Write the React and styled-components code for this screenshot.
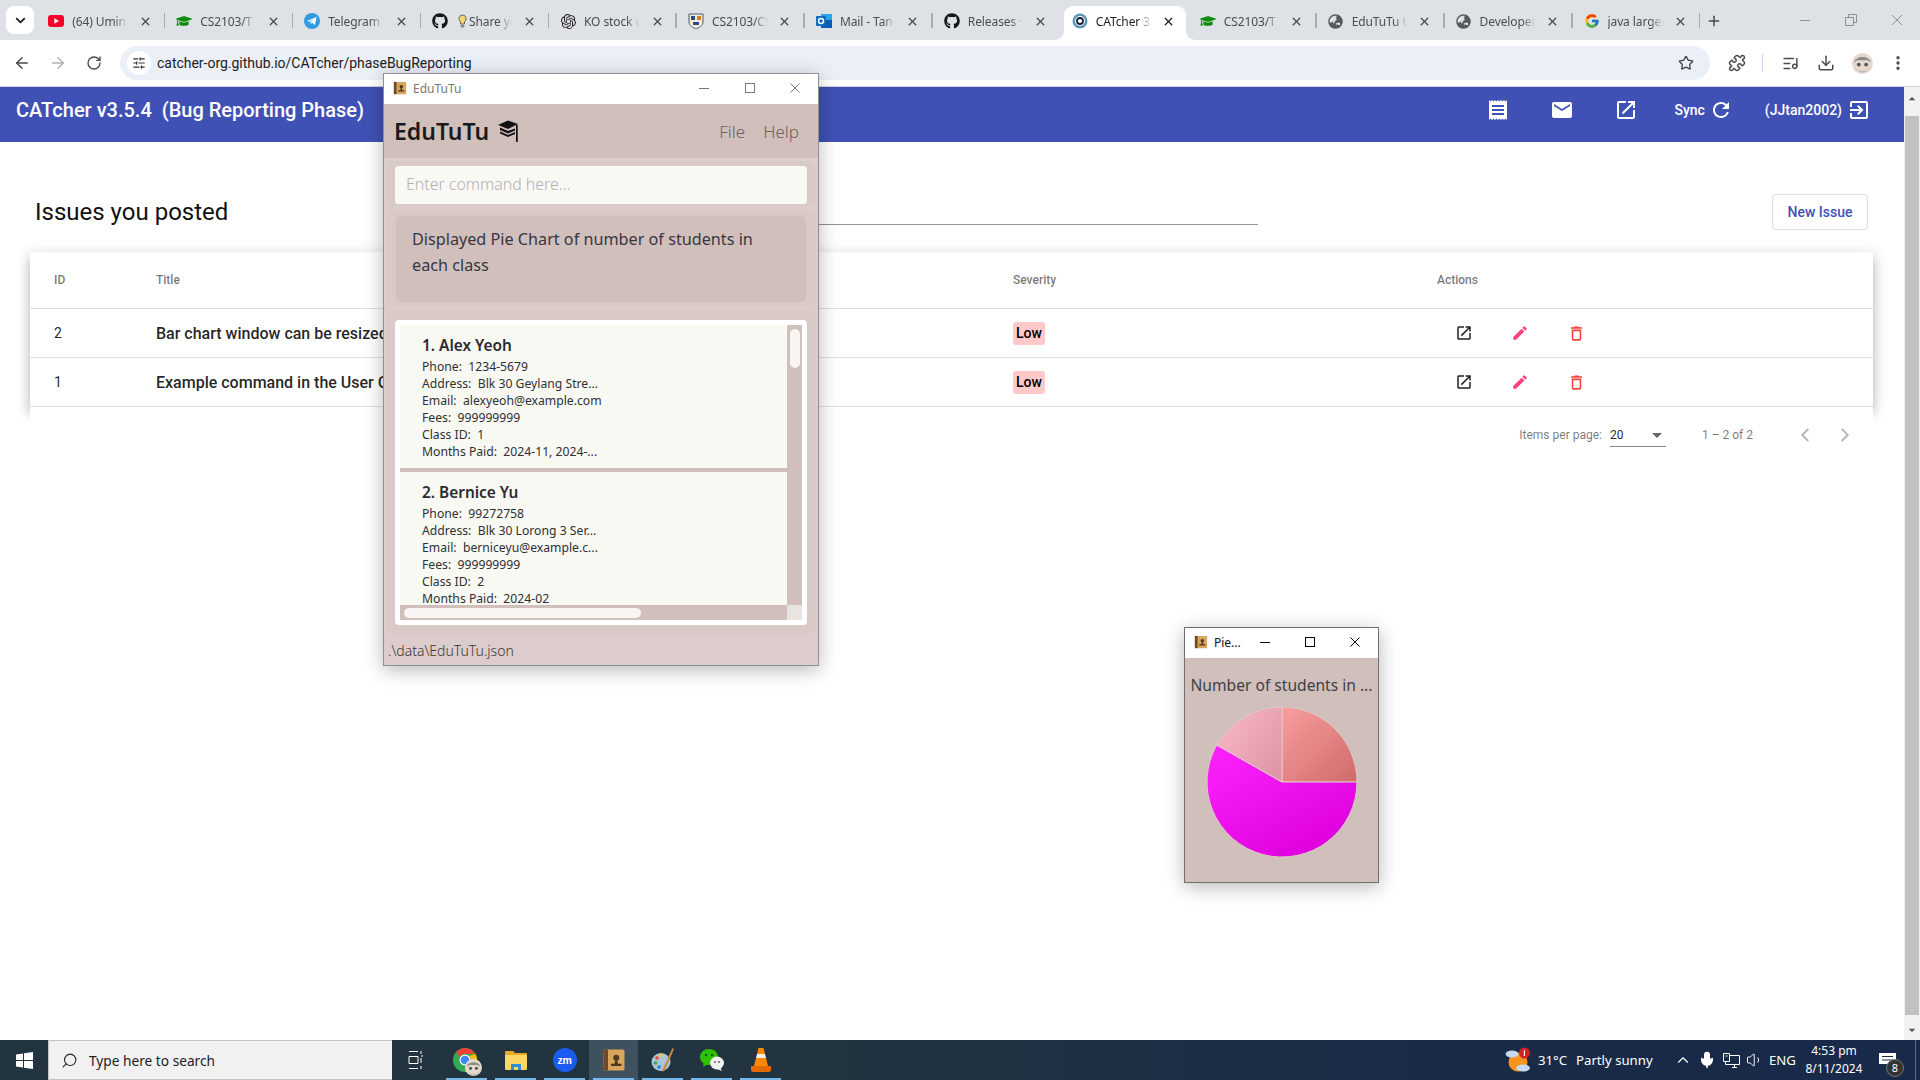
import React from "react";
import styled, { createGlobalStyle, css } from "styled-components";
import { ArrowLeft, ArrowRight, RotateCw, Star, Puzzle, ListMusic, Download, MoreVertical, ChevronDown, ChevronUp, ChevronLeft, ChevronRight, X, Plus, Search, SlidersHorizontal, Mic, Volume1 } from "lucide-react";
import { FaGithub, FaGraduationCap, FaGlobeAsia } from "react-icons/fa";
import { SiOpenai } from "react-icons/si";
import { FcGoogle } from "react-icons/fc";
import { MdReceipt, MdEmail, MdOpenInNew, MdRefresh, MdExitToApp, MdEdit, MdDeleteOutline, MdArrowDropDown, MdArrowDropUp } from "react-icons/md";

const SEGOE = `"Noto Sans", "Open Sans", sans-serif`;

const Global = createGlobalStyle`
  html, body { margin: 0; padding: 0; width: 1920px; height: 1080px; overflow: hidden; background: #fff; }
  body { font-family: Roboto, sans-serif; }
  * { box-sizing: border-box; }
`;

const Screen = styled.div`
  position: relative; width: 1920px; height: 1080px; display: flex; flex-direction: column; overflow: hidden;
`;

/* ---------- tab strip ---------- */
const TabStrip = styled.div`
  height: 40px; flex: none; background: #dee1e6; display: flex; align-items: flex-end; padding-left: 6px; position: relative;
`;
const TabSearch = styled.div`
  width: 28px; height: 28px; margin: 0 3.25px 6px 0; border-radius: 8px; background: #fff; display: flex; align-items: center; justify-content: center; color: #202124;
`;
const Tab = styled.div`
  position: relative; flex: none; width: 127.95px; height: 34px; display: flex; align-items: center; padding: 0 0 4px 11px; font-family: ${SEGOE}; font-size: 12px; letter-spacing: -0.1px;
  color: ${(p) => (p.$active ? "#1f1f1f" : "#4a4d52")};
  ${(p) => p.$sep && css`
    &::after { content: ""; position: absolute; right: 0; top: 7px; width: 1.5px; height: 15px; background: #a9acb1; }
  `}
`;
const TabShape = styled.div`
  position: absolute; left: 3px; right: 3px; top: 0; bottom: 0; background: #fff; border-radius: 9px 9px 0 0;
  &::before, &::after { content: ""; position: absolute; bottom: 0; width: 9px; height: 9px; }
  &::before { left: -9px; background: radial-gradient(circle at 0 0, transparent 8.5px, #fff 9px); }
  &::after { right: -9px; background: radial-gradient(circle at 100% 0, transparent 8.5px, #fff 9px); }
`;
const Fav = styled.span`
  position: relative; flex: none; width: 16px; height: 16px; display: flex; align-items: center; justify-content: center;
`;
const TabLabel = styled.span`
  position: relative; flex: none; width: 60px; margin-left: 8px; white-space: nowrap; overflow: hidden; display: flex; align-items: center;
  -webkit-mask-image: linear-gradient(90deg, #000 70%, transparent 93%); mask-image: linear-gradient(90deg, #000 70%, transparent 93%);
`;
const BulbMark = styled.svg`
  flex: none; margin: 0 2px 0 2px;
`;
const TabClose = styled.span`
  position: relative; flex: none; width: 16px; margin-left: 5px; display: flex; align-items: center; justify-content: center; color: ${(p) => (p.$active ? "#1f1f1f" : "#45484c")};
`;
const NewTab = styled.div`
  flex: none; width: 28px; height: 34px; padding-bottom: 4px; display: flex; align-items: center; justify-content: center; color: #45484c;
`;
const WinControls = styled.div`
  margin-left: auto; align-self: flex-start; height: 40px; display: flex;
`;
const WinSlot = styled.span`
  width: ${(p) => p.$w || 46}px; display: flex; align-items: center; justify-content: center; color: ${(p) => p.$c || "#8d9095"};
`;

/* ---------- toolbar ---------- */
const Toolbar = styled.div`
  height: 47px; flex: none; background: #fff; display: flex; align-items: flex-start; padding: 6px 0 0 4px; border-bottom: 1px solid #d0d2d5;
`;
const ToolSlot = styled.span`
  flex: none; width: 36px; height: 34px; display: flex; align-items: center; justify-content: center; color: ${(p) => p.$c || "#474a4e"};
`;
const AddressBar = styled.div`
  flex: none; margin-left: 8px; width: 1590px; height: 34px; border-radius: 17px; background: #ebeff7; display: flex; align-items: center; padding-left: 7px; color: #1f1f1f;
`;
const SiteButton = styled.span`
  width: 24px; height: 24px; border-radius: 50%; background: #fff; display: flex; align-items: center; justify-content: center; color: #333;
`;
const Url = styled.span`
  margin-left: 6px; font-family: Roboto, sans-serif; font-size: 14px; letter-spacing: -0.02px; color: #202124;
`;
const StarSlot = styled.span`
  margin-left: auto; margin-right: 16px; display: flex; color: #444;
`;
const ToolSep = styled.span`
  flex: none; width: 1px; height: 18px; margin: 8px 9px 0 7px; background: #c8d8f0;
`;
const FirstSlot = styled(ToolSlot)`
  margin-left: 9px;
`;

/* ---------- page ---------- */
const PageRow = styled.div`
  flex: 1; min-height: 0; display: flex;
`;
const Page = styled.div`
  flex: 1; min-width: 0; display: flex; flex-direction: column; background: #fff;
`;
const AppBar = styled.header`
  height: 55px; flex: none; background: #3f51b5; color: #fff; display: flex; align-items: center; padding: 0 28px 9px 16px;
`;
const AppTitle = styled.div`
  font-size: 20px; font-weight: 500; white-space: pre;
`;
const BarIcons = styled.div`
  margin-left: auto; display: flex; align-items: center; font-size: 14px; font-weight: 500;
`;
const BarIcon = styled.span`
  flex: none; width: ${(p) => p.$w || 64}px; margin-left: ${(p) => p.$ml || 0}px; display: flex; justify-content: center;
`;
const BarText = styled.span`
  margin-left: ${(p) => p.$ml || 0}px; white-space: nowrap;
`;
const Content = styled.main`
  padding: 52px 31px 0 30px;
`;
const TitleRow = styled.div`
  height: 36px; display: flex; align-items: center; margin-bottom: 22px;
`;
const Heading = styled.h1`
  flex: 0 0 530px; margin: 0; padding-left: 5px; font-size: 24px; font-weight: 400; color: #111;
`;
const FilterLine = styled.div`
  flex: none; width: 698px; height: 1px; margin-top: 24px; background: #949494;
`;
const NewIssue = styled.button`
  margin: 0 5px 0 auto; width: 96px; height: 36px; background: #fff; border: 1px solid #dfdfdf; border-radius: 4px; color: #3f51b5; font: 500 14px Roboto, sans-serif; padding: 0;
`;
const Table = styled.div`
  background: #fff; box-shadow: 0 5px 5px -3px rgba(0,0,0,.2), 0 8px 10px 1px rgba(0,0,0,.14), 0 3px 14px 2px rgba(0,0,0,.12);
`;
const Row = styled.div`
  display: grid; grid-template-columns: 126px 857px 424px 1fr; align-items: center; height: ${(p) => (p.$head ? 57 : 49)}px; border-bottom: 1px solid #dfdfdf;
  font-size: 14px; color: rgba(0,0,0,.87);
`;
const HeadCell = styled.div`
  font-size: 12px; font-weight: 500; color: rgba(0,0,0,.54); padding-left: ${(p) => p.$pl || 0}px;
`;
const IdCell = styled.div`
  padding-left: 24px;
`;
const TitleCell = styled.div`
  font-size: 16px; font-weight: 500; white-space: nowrap; overflow: hidden;
`;
const Badge = styled.span`
  display: inline-flex; align-items: center; justify-content: center; width: 32px; height: 23px; border-radius: 3px; background: #ffc9c9; color: #000; font-weight: 500; font-size: 14px; vertical-align: middle;
`;
const SeverityCell = styled.div`
  display: flex; align-items: center;
`;
const Actions = styled.div`
  display: flex; padding-left: 18px;
`;
const ActionIcon = styled.span`
  flex: none; width: 56px; display: flex; color: ${(p) => p.$c};
`;
const Paginator = styled.div`
  position: relative; background: #fff; height: 56px; display: flex; align-items: center; justify-content: flex-end; padding-right: 8px; font-size: 12px; color: rgba(0,0,0,.54);
`;
const PageSelect = styled.div`
  position: relative; flex: none; width: 56px; height: 24px; margin-left: 8px; border-bottom: 1px solid #8a8a8a; color: rgba(0,0,0,.87); display: flex; align-items: center;
  & > svg { position: absolute; right: -3px; top: 0; color: #666; }
`;
const RangeLabel = styled.span`
  margin: 0 32px 0 36px;
`;
const PageBtn = styled.span`
  flex: none; width: 40px; display: flex; justify-content: center; color: #b5b5b5;
`;
const PageScrollbar = styled.div`
  flex: none; width: 16px; background: #f1f1f1; display: flex; flex-direction: column; align-items: center; color: #505050; padding: 4px 0 2px;
`;
const ThumbTrack = styled.div`
  flex: 1; width: 100%; padding: 9px 1px 7px; display: flex;
`;
const Thumb = styled.div`
  flex: 1; background: #c1c1c1;
`;

/* ---------- taskbar ---------- */
const Taskbar = styled.footer`
  height: 40px; flex: none; display: flex; align-items: center; background: linear-gradient(90deg, #21343f 0%, #21343f 42%, #1a2b47 75%, #18294a 100%); color: #fff; font-family: ${SEGOE};
`;
const StartBtn = styled.div`
  flex: none; width: 48px; height: 40px; display: flex; align-items: center; justify-content: center;
`;
const SearchBox = styled.div`
  flex: none; width: 344px; height: 40px; background: #f1f1f1; border: 1px solid #c4c4c4; border-width: 1px 0 1px 1px; display: flex; align-items: center; padding-left: 12px; color: #222; font-size: 13.7px;
  & > svg { transform: scaleX(-1); margin-right: 11px; }
`;
const TaskView = styled.div`
  flex: none; width: 48px; height: 40px; display: flex; align-items: center; justify-content: center; margin-right: 2px;
`;
const AppSlot = styled.div`
  position: relative; flex: none; width: 49px; height: 40px; display: flex; align-items: center; justify-content: center;
  ${(p) => p.$on && css`background: #3d525e;`}
  ${(p) => p.$run && css`
    &::after { content: ""; position: absolute; left: 4px; right: 4px; bottom: 0; height: 2px; background: #76b9ed; }
  `}
`;
const ZoomIcon = styled.span`
  width: 24px; height: 24px; border-radius: 50%; background: #1a5cf0; color: #fff; font: 700 10.5px/24px "Liberation Sans", sans-serif; text-align: center; letter-spacing: -.4px;
`;
const ChromeWrap = styled.span`
  position: relative; display: flex; margin-left: -3px;
`;
const ChromeBadge = styled.span`
  position: absolute; right: -5px; bottom: -4px; display: flex;
`;
const Tray = styled.div`
  margin-left: auto; height: 40px; display: flex; align-items: center; font-size: 13.2px; padding-right: 4px;
`;
const TrayText = styled.span`
  flex: none; width: ${(p) => p.$w}px; margin-left: ${(p) => p.$ml || 0}px; white-space: nowrap;
`;
const TraySlot = styled.span`
  flex: none; width: ${(p) => p.$w || 24}px; margin-left: ${(p) => p.$ml || 0}px; display: flex; justify-content: center; align-items: center; position: relative;
`;
const Clock = styled.div`
  flex: none; width: 64px; margin-left: 7px; text-align: center; font-size: 12px; line-height: 18px; white-space: nowrap;
`;
const NoteCount = styled.span`
  position: absolute; left: 20px; top: 6px; width: 18px; height: 18px; border-radius: 50%; background: #333; border: 1px solid #777; color: #fff; font-size: 11px; line-height: 16px; text-align: center;
`;
const DesktopEdge = styled.span`
  flex: none; width: 1px; height: 40px; background: #5f6f85; margin-left: 7px;
`;

/* ---------- desktop windows ---------- */
const FxWindow = styled.section`
  position: absolute; left: ${(p) => p.$x}px; top: ${(p) => p.$y}px; width: ${(p) => p.$w}px; height: ${(p) => p.$h}px; display: flex; flex-direction: column;
  border: 1px solid ${(p) => p.$border}; background: #dccccb; font-family: ${SEGOE};
  box-shadow: 0 4px 18px rgba(0,0,0,.28);
`;
const FxTitle = styled.div`
  flex: none; height: 30px; background: #fff; display: flex; align-items: center; padding: 0 ${(p) => p.$pr}px 2px 9px; font-size: 12px; color: ${(p) => p.$c};
`;
const FxName = styled.span`
  margin-left: 6px;
`;
const FxButtons = styled.div`
  margin-left: auto; display: flex; height: 100%;
`;
const MenuBar = styled.div`
  flex: none; height: 54px; background: #d1bfbc; display: flex; align-items: center; padding-left: 10px;
`;
const Logo = styled.div`
  font-size: 23px; font-weight: 600; color: #1a1a1a; display: flex; align-items: center;
  & > svg { margin-left: 8px; }
`;
const MenuItems = styled.div`
  margin-left: auto; margin-right: 19px; display: flex; gap: 18px; font-size: 17px; font-weight: 300; color: #6f5f5d;
`;
const Pane = styled.div`
  flex: ${(p) => (p.$grow ? "1 1 0" : "none")}; min-height: 0; height: ${(p) => (p.$h ? p.$h + "px" : "auto")}; margin: 2px 2px 0; border-radius: 8px; background: #d9c9c7; border: 1px solid #dccecc; display: flex; flex-direction: column; padding: ${(p) => p.$pad};
`;
const CommandBox = styled.div`
  height: 38px; flex: none; border-radius: 3px; background: #f9f9f4; padding: 0 0 2px 11px; display: flex; align-items: center; font-size: 15.9px; font-weight: 300; color: #b5adb6;
`;
const ResultBox = styled.div`
  height: 86px; flex: none; border-radius: 5px; background: #d1bfbc; padding: 10px 16px; font-size: 16.2px; line-height: 26px; color: #37373f;
`;
const ListFrame = styled.div`
  flex: 1; min-height: 0; background: #fff; border-radius: 4px; padding: 5px; display: grid; grid-template-columns: 1fr 15px; grid-template-rows: 1fr 15px;
`;
const ListView = styled.div`
  overflow: hidden; min-height: 0; background: #d1bfbc; display: flex; flex-direction: column; gap: 4px;
`;
const Card = styled.article`
  flex: none; height: 143px; background: #f9f9f4; padding: 11px 0 0 22px; color: #2f2f33;
`;
const CardName = styled.div`
  font-size: 15.4px; font-weight: 600; line-height: 20px; margin-bottom: 2px; white-space: pre; color: #2b2b2f;
`;
const CardLine = styled.div`
  font-size: 12.2px; line-height: 17px; white-space: pre;
`;
const VBar = styled.div`
  background: #d1bfbc; padding: 4px 2px 0 3px;
`;
const VThumb = styled.div`
  height: 39px; background: #f9f5f3; border-radius: 5px;
`;
const HBar = styled.div`
  background: #d1bfbc; padding: 3px 0 2px 4px;
`;
const HThumb = styled.div`
  width: 237px; height: 10px; background: #f9f5f3; border-radius: 5px;
`;
const Corner = styled.div`
  background: #e8e4e4;
`;
const StatusBar = styled.div`
  flex: none; height: 30px; display: flex; align-items: center; padding-left: 4px; font-size: 14px; font-weight: 300; color: #3c3538;
`;
const ChartBody = styled.div`
  flex: 1; background: #d1bfbc; display: flex; flex-direction: column; align-items: center;
`;
const ChartTitle = styled.div`
  margin-top: 14px; height: 26px; font-size: 15.6px; line-height: 26px; color: #3f3f46; white-space: nowrap;
`;
const PieSvg = styled.svg`
  margin-top: 7px;
`;

/* ---------- drawn icons ---------- */
const BookIcon = ({ s = 14 }) => (
  <svg width={s} height={s} viewBox="0 0 16 16">
    <rect x="1" y="1" width="14" height="14" rx="1" fill="#d9a55b" />
    <rect x="1" y="1" width="3" height="14" fill="#6d4a2a" />
    <circle cx="9.5" cy="6.5" r="2" fill="#4d3a22" />
    <path d="M9 8h1l.7 2.500H13v1.500H6v-1.500h2.300z" fill="#4d3a22" />
  </svg>
);
const CapLogo = () => (
  <svg width="22" height="24" viewBox="0 0 22 24">
    <path d="M1 6 L11 1.500 L21 5 L11 10z" fill="#111" />
    <path d="M3 8.500 L11 12 L18 9.500 V11.500 L11 14.500 L3 11z" fill="#111" />
    <path d="M3 12.500 L11 16 L18 13 V15 L11 18 L3 14.500z" fill="#111" />
    <rect x="19" y="6" width="1.700" height="17" fill="#111" />
  </svg>
);
const MinMaxClose = ({ c, slots, sw = 1 }) => (
  <FxButtons>
    <WinSlot $w={slots} $c={c}><svg width="12" height="12"><path d="M1 6.500h10" stroke="currentColor" strokeWidth={sw} /></svg></WinSlot>
    <WinSlot $w={slots} $c={c}><svg width="12" height="12"><rect x="1.500" y="1.500" width="9" height="9" fill="none" stroke="currentColor" strokeWidth={sw} /></svg></WinSlot>
    <WinSlot $w={slots} $c={c}><svg width="12" height="12"><path d="M1.500 1.500l9 9M10.500 1.500l-9 9" stroke="currentColor" strokeWidth={sw} /></svg></WinSlot>
  </FxButtons>
);
const Avatar = ({ s = 20 }) => (
  <svg width={s} height={s} viewBox="0 0 20 20">
    <circle cx="10" cy="10" r="10" fill="#e8d9cf" />
    <path d="M2 9 C3 2 17 2 18 9 L15 7 H5z" fill="#8a8a8a" />
    <circle cx="6.500" cy="11" r="1.800" fill="#555" /><circle cx="13.500" cy="11" r="1.800" fill="#555" />
    <path d="M3 14 C5 20 15 20 17 14 L14 17 H6z" fill="#bbb" />
  </svg>
);
const UtubeFav = () => (
  <svg width="16" height="16" viewBox="0 0 16 16"><rect x="0" y="2" width="16" height="12" rx="3" fill="#f4002b" /><path d="M6.300 5.200 L11 8 L6.300 10.800z" fill="#fff" /></svg>
);
const TgFav = () => (
  <svg width="16" height="16" viewBox="0 0 16 16"><circle cx="8" cy="8" r="8" fill="#2f9ae0" /><path d="M3 8 L12.500 4 L11 12 L8 9.800 L6.800 11 L6.400 8.900 L10.500 5.800 L5.400 8.800z" fill="#fff" /></svg>
);
const NusFav = () => (
  <svg width="16" height="16" viewBox="0 0 16 16"><path d="M1 1h14v8c0 4-4 5.500-7 7-3-1.500-7-3-7-7z" fill="#f5ead2" stroke="#4a5a80" /><rect x="3" y="3" width="4" height="4" fill="#2c4a8a" /><rect x="9" y="3" width="4" height="4" fill="#d97a2a" /><rect x="5" y="9" width="6" height="3" fill="#2c4a8a" /></svg>
);
const OutlookFav = () => (
  <svg width="16" height="16" viewBox="0 0 16 16"><rect x="5" y="1" width="11" height="12" fill="#28a8ea" /><rect x="5" y="7" width="11" height="8" fill="#0a5fb4" /><rect x="0" y="3" width="10" height="10" rx="1" fill="#0f6cbd" /><circle cx="5" cy="8" r="2.500" fill="none" stroke="#fff" strokeWidth="1.500" /></svg>
);
const CatcherFav = () => (
  <svg width="16" height="16" viewBox="0 0 16 16"><circle cx="8" cy="8" r="7.500" fill="#5b93bd" /><circle cx="8" cy="8" r="5" fill="#fff" /><circle cx="8" cy="8" r="3" fill="none" stroke="#123" strokeWidth="1.800" /></svg>
);
const Bulb = () => (
  <BulbMark width="9" height="15" viewBox="0 0 9 15"><path d="M4.500 1a3.600 3.600 0 0 0-2 6.600V10h4V7.600A3.600 3.600 0 0 0 4.500 1z" fill="#f9d56e" stroke="#333" strokeWidth=".7" /><rect x="2.700" y="11" width="3.600" height="2.400" fill="#888" /></BulbMark>
);
const WindowsLogo = () => (
  <svg width="17" height="17" viewBox="0 0 17 17"><path d="M0 2.400l7-1v6.600H0zM8 1.300l9-1.300V8H8zM0 9h7v6.600l-7-1zM8 9h9v8l-9-1.300z" fill="#fff" /></svg>
);
const TaskViewIcon = () => (
  <svg width="16" height="24" viewBox="0 0 16 24" fill="none" stroke="#fff"><path d="M1 3.500h9M1 20.500h9M1 8.500h9v7H1zM13 3v3M13 8h2M13 10v5M13 18v3" /></svg>
);
const ChromeIcon = () => (
  <ChromeWrap>
    <svg width="24" height="24" viewBox="0 0 24 24">
      <circle cx="12" cy="12" r="12" fill="#34a853" />
      <path d="M12 0a12 12 0 0 1 10.400 6H12a6 6 0 0 0-5.200 3L3.200 3.800A12 12 0 0 1 12 0z" fill="#ea4335" />
      <path d="M22.400 6A12 12 0 0 1 12 24l5.200-9A6 6 0 0 0 16 8z" fill="#fbbc05" />
      <circle cx="12" cy="12" r="5.500" fill="#fff" /><circle cx="12" cy="12" r="4.300" fill="#4285f4" />
    </svg>
    <ChromeBadge><Avatar s={17} /></ChromeBadge>
  </ChromeWrap>
);
const FolderIcon = () => (
  <svg width="22" height="20" viewBox="0 0 22 20"><path d="M0 2a1 1 0 0 1 1-1h7l2 2h11a1 1 0 0 1 1 1v3H0z" fill="#e8ab2e" /><rect y="5" width="22" height="15" rx="1" fill="#fcd664" /><path d="M6 20v-6h10v6h-3v-3H9v3z" fill="#2a8fd6" /></svg>
);
const PaletteIcon = () => (
  <svg width="24" height="26" viewBox="0 0 24 26"><ellipse cx="10" cy="15" rx="9.500" ry="9" fill="#a9c6dc" /><circle cx="6" cy="11" r="1.800" fill="#e94b3c" /><circle cx="10" cy="8.500" r="1.800" fill="#f7c331" /><circle cx="4.500" cy="16" r="1.800" fill="#3aa655" /><circle cx="8" cy="20" r="1.800" fill="#2d7fd3" /><path d="M21.500 1 L23 2 L14 23 L11.500 25 L12 21.500z" fill="#c98a3e" /></svg>
);
const WeChatIcon = () => (
  <svg width="26" height="26" viewBox="0 0 26 26"><ellipse cx="10" cy="10" rx="9" ry="8" fill="#2dc100" /><path d="M5 15l-1 5 5-3z" fill="#2dc100" /><circle cx="7" cy="8" r="1.200" fill="#0a5a00" /><circle cx="13" cy="8" r="1.200" fill="#0a5a00" /><ellipse cx="18" cy="16" rx="7" ry="6.500" fill="#f1f1f1" /><path d="M21 20l2 4-5-2z" fill="#f1f1f1" /><circle cx="16" cy="15" r="1" fill="#666" /><circle cx="20" cy="15" r="1" fill="#666" /></svg>
);
const VlcIcon = () => (
  <svg width="22" height="26" viewBox="0 0 22 26"><path d="M8.500 1h5l1.500 6H7z" fill="#ff8800" /><path d="M7 7h8l1 4H6z" fill="#eee" /><path d="M6 11h10l2 8H4z" fill="#ff8800" /><path d="M1 19h20v4a2 2 0 0 1-2 2H3a2 2 0 0 1-2-2z" fill="#e36a00" /></svg>
);
const WeatherIcon = () => (
  <svg width="26" height="26" viewBox="0 0 26 26">
    <circle cx="13" cy="15" r="9.500" fill="#f7941d" />
    <ellipse cx="7" cy="7" rx="6.500" ry="3.500" fill="#c6d9f0" />
    <ellipse cx="18" cy="21" rx="7" ry="3.500" fill="#c6d9f0" />
    <circle cx="19.500" cy="6" r="5.500" fill="#d32020" />
    <path d="M19 3.500l1-.7v6.200h-1.200V4.500z" fill="#fff" />
  </svg>
);
const NetIcon = () => (
  <svg width="17" height="15" viewBox="0 0 17 15" fill="none" stroke="#fff"><path d="M.5.500h6v8h-6zM2.500 3h2M6.500 2.500h10v9h-14V8.500M9 14.500h5M11.500 11.500v3" /></svg>
);
const NoteIcon = () => (
  <svg width="17" height="15" viewBox="0 0 17 15"><path d="M0 0h17v11h-5l-3 3.500V11H0z" fill="#fff" /><path d="M3 3.500h11M3 7h11" stroke="#1a2b47" /></svg>
);
const Pie = () => {
  const c = 77, r = 75;
  return (
    <PieSvg width="154" height="154" viewBox="0 0 154 154">
      <defs>
        <linearGradient id="a" x1="0" y1="0" x2="1" y2="1"><stop offset="0" stopColor="#f99e9e" /><stop offset="1" stopColor="#cf6a6a" /></linearGradient>
        <linearGradient id="b" x1="0" y1="0" x2="0.700" y2="1"><stop offset="0" stopColor="#ff24ff" /><stop offset="1" stopColor="#dd00dd" /></linearGradient>
        <linearGradient id="d" x1="0" y1="0" x2="1" y2="0.800"><stop offset="0" stopColor="#fbb9c8" /><stop offset="1" stopColor="#dd97a6" /></linearGradient>
      </defs>
      <path d={`M${c} ${c}L${c} ${c - r}A${r} ${r} 0 0 1 ${c + r} ${c}Z`} fill="url(#a)" stroke="#dfc9c6" />
      <path d={`M${c} ${c}L${c + r} ${c}A${r} ${r} 0 1 1 ${c - r * 0.87} ${c - r * 0.493}Z`} fill="url(#b)" stroke="#dfc9c6" />
      <path d={`M${c} ${c}L${c - r * 0.87} ${c - r * 0.493}A${r} ${r} 0 0 1 ${c} ${c - r}Z`} fill="url(#d)" stroke="#dfc9c6" />
    </PieSvg>
  );
};

/* ---------- data ---------- */
const tabs = [
  { f: <UtubeFav />, t: "(64) Umine", sep: 1 },
  { f: <FaGraduationCap size={16} color="#0e8a0e" />, t: "CS2103/T -", sep: 1 },
  { f: <TgFav />, t: "Telegram W", sep: 1 },
  { f: <FaGithub size={16} color="#161616" />, t: "Share yo", bulb: 1, sep: 1 },
  { f: <SiOpenai size={15} color="#222" />, t: "KO stock d", sep: 1 },
  { f: <NusFav />, t: "CS2103/CS", sep: 1 },
  { f: <OutlookFav />, t: "Mail - Tan J", sep: 1 },
  { f: <FaGithub size={16} color="#161616" />, t: "Releases · A" },
  { f: <CatcherFav />, t: "CATcher 3.5", active: 1 },
  { f: <FaGraduationCap size={16} color="#0e8a0e" />, t: "CS2103/T -", sep: 1 },
  { f: <FaGlobeAsia size={15} color="#55585c" />, t: "EduTuTu U", sep: 1 },
  { f: <FaGlobeAsia size={15} color="#55585c" />, t: "Developer", sep: 1 },
  { f: <FcGoogle size={16} />, t: "java largex", sep: 1 },
];

const issues = [
  { id: 2, title: "Bar chart window can be resized" },
  { id: 1, title: "Example command in the User Guide" },
];

const people = [
  { name: "1. Alex Yeoh", lines: ["Phone:  1234-5679", "Address:  Blk 30 Geylang Stre...", "Email:  alexyeoh@example.com", "Fees:  999999999", "Class ID:  1", "Months Paid:  2024-11, 2024-..."] },
  { name: "2. Bernice Yu", lines: ["Phone:  99272758", "Address:  Blk 30 Lorong 3 Ser...", "Email:  berniceyu@example.c...", "Fees:  999999999", "Class ID:  2", "Months Paid:  2024-02"] },
];

export default function App() {
  return (
    <Screen>
      <Global />
      <TabStrip>
        <TabSearch><ChevronDown size={15} strokeWidth={3} /></TabSearch>
        {tabs.map((t, i) => (
          <Tab key={i} $active={t.active} $sep={t.sep}>
            {t.active && <TabShape />}
            <Fav>{t.f}</Fav>
            <TabLabel>{t.bulb && <Bulb />}{t.t}</TabLabel>
            <TabClose $active={t.active}><X size={13} strokeWidth={2.4} /></TabClose>
          </Tab>
        ))}
        <NewTab><Plus size={16} strokeWidth={2.2} /></NewTab>
        <WinControls>
          <WinSlot><svg width="12" height="12"><path d="M1 6.500h10" stroke="currentColor" /></svg></WinSlot>
          <WinSlot><svg width="12" height="12" fill="none" stroke="currentColor"><path d="M.500 3.500h8v8h-8zM3.500 3.500v-3h8v8h-3" /></svg></WinSlot>
          <WinSlot><svg width="12" height="12"><path d="M1 1l10 10M11 1L1 11" stroke="currentColor" /></svg></WinSlot>
        </WinControls>
      </TabStrip>

      <Toolbar>
        <ToolSlot><ArrowLeft size={18} strokeWidth={2} /></ToolSlot>
        <ToolSlot $c="#b0b2b5"><ArrowRight size={18} strokeWidth={2} /></ToolSlot>
        <ToolSlot><RotateCw size={16} strokeWidth={2} /></ToolSlot>
        <AddressBar>
          <SiteButton><SlidersHorizontal size={14} strokeWidth={2} /></SiteButton>
          <Url>catcher-org.github.io/CATcher/phaseBugReporting</Url>
          <StarSlot><Star size={16} strokeWidth={2} /></StarSlot>
        </AddressBar>
        <FirstSlot><Puzzle size={18} strokeWidth={2} /></FirstSlot>
        <ToolSep />
        <ToolSlot><ListMusic size={17} strokeWidth={2} /></ToolSlot>
        <ToolSlot><Download size={18} strokeWidth={2} /></ToolSlot>
        <ToolSlot><Avatar s={21} /></ToolSlot>
        <ToolSlot><MoreVertical size={18} strokeWidth={2.4} /></ToolSlot>
      </Toolbar>

      <PageRow>
        <Page>
          <AppBar>
            <AppTitle>CATcher v3.5.4  (Bug Reporting Phase)</AppTitle>
            <BarIcons>
              <BarIcon><MdReceipt size={24} /></BarIcon>
              <BarIcon><MdEmail size={24} /></BarIcon>
              <BarIcon><MdOpenInNew size={24} /></BarIcon>
              <BarText $ml={16}>Sync</BarText>
              <BarIcon $w={24} $ml={4}><MdRefresh size={24} /></BarIcon>
              <BarText $ml={32}>(JJtan2002)</BarText>
              <BarIcon $w={34}><MdExitToApp size={24} /></BarIcon>
            </BarIcons>
          </AppBar>
          <Content>
            <TitleRow>
              <Heading>Issues you posted</Heading>
              <FilterLine />
              <NewIssue>New Issue</NewIssue>
            </TitleRow>
            <Table>
              <Row $head>
                <HeadCell $pl={24}>ID</HeadCell>
                <HeadCell>Title</HeadCell>
                <HeadCell>Severity</HeadCell>
                <HeadCell>Actions</HeadCell>
              </Row>
              {issues.map((it) => (
                <Row key={it.id}>
                  <IdCell>{it.id}</IdCell>
                  <TitleCell>{it.title}</TitleCell>
                  <SeverityCell><Badge>Low</Badge></SeverityCell>
                  <Actions>
                    <ActionIcon $c="#222"><MdOpenInNew size={18} /></ActionIcon>
                    <ActionIcon $c="#ff4081"><MdEdit size={18} /></ActionIcon>
                    <ActionIcon $c="#f44336"><MdDeleteOutline size={19} /></ActionIcon>
                  </Actions>
                </Row>
              ))}
            </Table>
            <Paginator>
              <span>Items per page:</span>
              <PageSelect>20<MdArrowDropDown size={24} /></PageSelect>
              <RangeLabel>1 – 2 of 2</RangeLabel>
              <PageBtn><ChevronLeft size={22} strokeWidth={2} /></PageBtn>
              <PageBtn><ChevronRight size={22} strokeWidth={2} /></PageBtn>
            </Paginator>
          </Content>
        </Page>
        <PageScrollbar>
          <MdArrowDropUp size={16} />
          <ThumbTrack><Thumb /></ThumbTrack>
          <MdArrowDropDown size={16} />
        </PageScrollbar>
      </PageRow>

      <Taskbar>
        <StartBtn><WindowsLogo /></StartBtn>
        <SearchBox><Search size={17} strokeWidth={1.5} />Type here to search</SearchBox>
        <TaskView><TaskViewIcon /></TaskView>
        <AppSlot $run><ChromeIcon /></AppSlot>
        <AppSlot $run><FolderIcon /></AppSlot>
        <AppSlot $run><ZoomIcon>zm</ZoomIcon></AppSlot>
        <AppSlot $run $on><BookIcon s={24} /></AppSlot>
        <AppSlot $run><PaletteIcon /></AppSlot>
        <AppSlot $run><WeChatIcon /></AppSlot>
        <AppSlot $run><VlcIcon /></AppSlot>
        <Tray>
          <TraySlot $w={26}><WeatherIcon /></TraySlot>
          <TrayText $w={29} $ml={7}>31°C</TrayText>
          <TrayText $w={78} $ml={9}>Partly sunny</TrayText>
          <TraySlot $ml={17}><ChevronUp size={18} strokeWidth={1.5} /></TraySlot>
          <TraySlot><Mic size={18} strokeWidth={2} fill="#fff" /></TraySlot>
          <TraySlot><NetIcon /></TraySlot>
          <TraySlot><Volume1 size={18} strokeWidth={1.3} /></TraySlot>
          <TrayText $w={26} $ml={2}>ENG</TrayText>
          <Clock>4:53 pm<br />8/11/2024</Clock>
          <TraySlot $w={42}><NoteIcon /><NoteCount>8</NoteCount></TraySlot>
          <DesktopEdge />
        </Tray>
      </Taskbar>

      <FxWindow $x={383} $y={73} $w={436} $h={593} $border="#8d9196">
        <FxTitle $c="#777" $pr={0}>
          <BookIcon />
          <FxName>EduTuTu</FxName>
          <MinMaxClose c="#777" slots={45.5} />
        </FxTitle>
        <MenuBar>
          <Logo>EduTuTu<CapLogo /></Logo>
          <MenuItems><span>File</span><span>Help</span></MenuItems>
        </MenuBar>
        <Pane $h={47} $pad="5px 8px 0">
          <CommandBox>Enter command here...</CommandBox>
        </Pane>
        <Pane $h={98} $pad="6px 9px 0">
          <ResultBox>Displayed Pie Chart of number of students in each class</ResultBox>
        </Pane>
        <Pane $grow $pad="10px 8px 9px">
          <ListFrame>
            <ListView>
              {people.map((p) => (
                <Card key={p.name}>
                  <CardName>{p.name}</CardName>
                  {p.lines.map((l) => <CardLine key={l}>{l}</CardLine>)}
                </Card>
              ))}
            </ListView>
            <VBar><VThumb /></VBar>
            <HBar><HThumb /></HBar>
            <Corner />
          </ListFrame>
        </Pane>
        <StatusBar>.\data\EduTuTu.json</StatusBar>
      </FxWindow>

      <FxWindow $x={1184} $y={627} $w={195} $h={256} $border="#707070">
        <FxTitle $c="#111" $pr={1}>
          <BookIcon />
          <FxName>Pie...</FxName>
          <MinMaxClose c="#000" slots={45} />
        </FxTitle>
        <ChartBody>
          <ChartTitle>Number of students in ...</ChartTitle>
          <Pie />
        </ChartBody>
      </FxWindow>
    </Screen>
  );
}
